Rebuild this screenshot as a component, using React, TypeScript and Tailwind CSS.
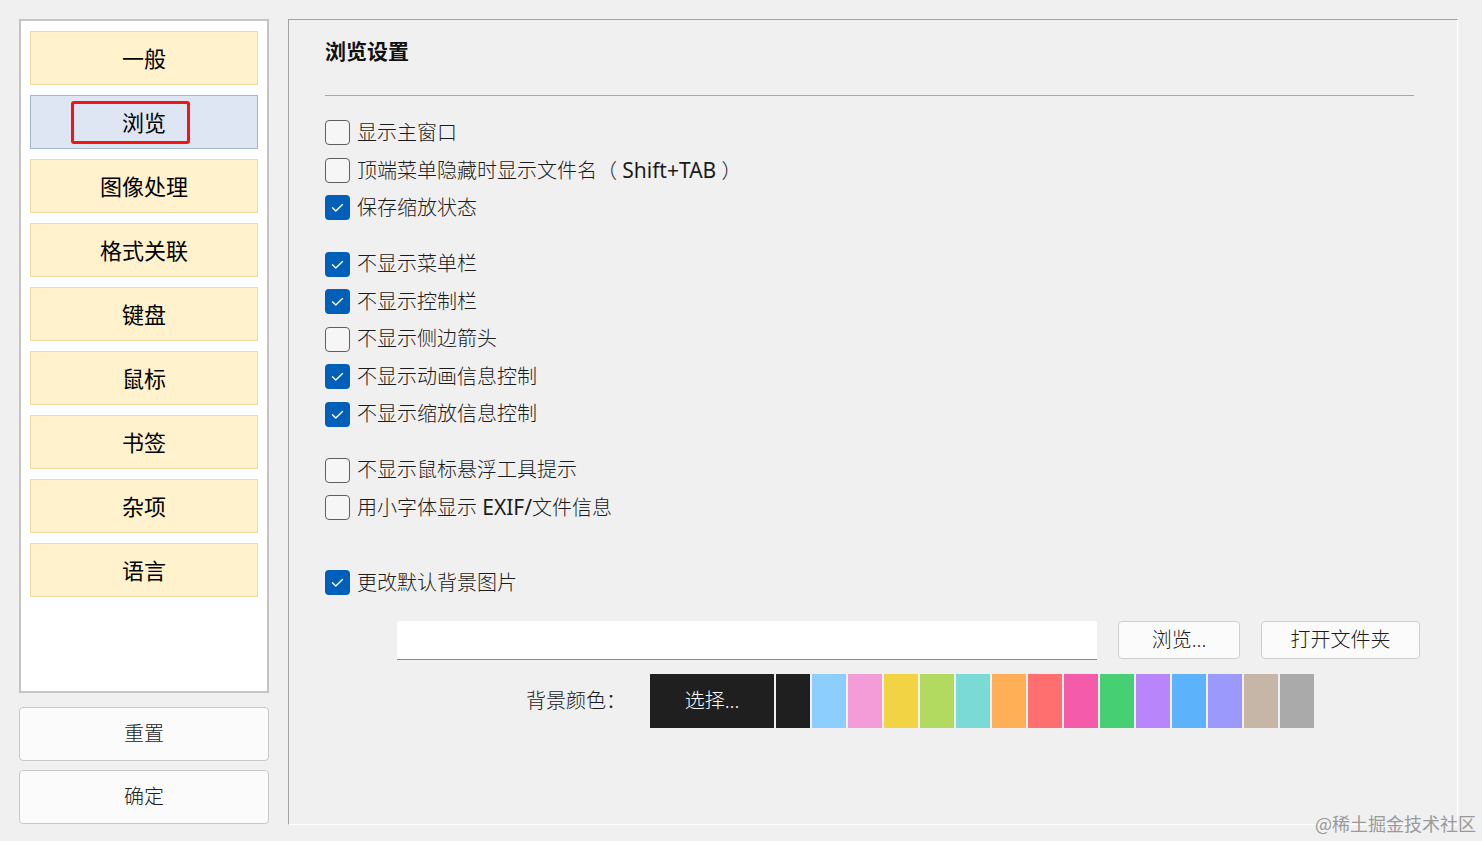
import React from 'react'

const navItems = ['一般', '浏览', '图像处理', '格式关联', '键盘', '鼠标', '书签', '杂项', '语言']

const swatches = [
  '#1f1f1f', '#8ccfff', '#f39cd8', '#f2d344', '#b2da60', '#7adbd6', '#ffb057', '#ff6f6f',
  '#f45ba9', '#46cf73', '#b885fa', '#5cb2fb', '#9b99fb', '#c6b6a8', '#aaaaaa',
]

const groups: { label: React.ReactNode; checked: boolean }[][] = [
  [
    { label: '显示主窗口', checked: false },
    {
      label: (
        <>
          顶端菜单隐藏时显示文件名（ <span className="text-[21px] font-normal">Shift+TAB</span> ）
        </>
      ),
      checked: false,
    },
    { label: '保存缩放状态', checked: true },
  ],
  [
    { label: '不显示菜单栏', checked: true },
    { label: '不显示控制栏', checked: true },
    { label: '不显示侧边箭头', checked: false },
    { label: '不显示动画信息控制', checked: true },
    { label: '不显示缩放信息控制', checked: true },
  ],
  [
    { label: '不显示鼠标悬浮工具提示', checked: false },
    {
      label: (
        <>
          用小字体显示 <span className="text-[21px] font-normal">EXIF/</span>文件信息
        </>
      ),
      checked: false,
    },
  ],
  [{ label: '更改默认背景图片', checked: true }],
]

function CheckRow({ label, checked }: { label: React.ReactNode; checked: boolean }) {
  return (
    <div className="flex h-[37.5px] items-center">
      {checked ? (
        <div className="flex h-[25px] w-[25px] items-center justify-center rounded-[4px] bg-[#005fb8]">
          <svg width="25" height="25" viewBox="0 0 25 25" fill="none">
            <path d="M7.5 12.8l3.3 3.3 6.7-6.7" stroke="#fff" strokeWidth="1.4" strokeLinecap="round" strokeLinejoin="round" />
          </svg>
        </div>
      ) : (
        <div className="h-[25px] w-[25px] rounded-[4px] border-[1.5px] border-[#5f5f5f] bg-[#f6f6f6]" />
      )}
      <span className="ml-[7px] text-[20px] font-light leading-none text-[#1b1b1b]">{label}</span>
    </div>
  )
}

export default function App() {
  return (
    <div
      className="relative flex h-[841px] w-[1482px] gap-[19px] overflow-hidden bg-[#f0f0f0] pl-[19px] pt-[19px]"
      style={{ fontFamily: '"Noto Sans", "Noto Sans CJK SC", sans-serif' }}
    >
      {/* Left column */}
      <div className="flex w-[250px] flex-col">
        <div className="flex h-[674px] flex-col gap-[10px] border-2 border-[#c4c4c4] bg-white px-[9px] pt-[10px]">
          {navItems.map((item) => {
            const active = item === '浏览'
            return (
              <div
                key={item}
                className={`relative flex h-[54px] items-center justify-center border text-[22px] text-black ${
                  active ? 'border-[#a3b6d6] bg-[#dee6f4]' : 'border-[#f3d9a3] bg-[#fff2cc]'
                }`}
              >
                {item}
                {active && (
                  <div className="absolute left-[40px] top-[5px] h-[43px] w-[119px] rounded-[3px] border-[3px] border-[#f41414]" />
                )}
              </div>
            )
          })}
        </div>
        <button className="mt-[14px] h-[54px] rounded-[4px] border border-[#c8c8c8] bg-[#fbfbfb] text-[20px] font-light text-[#222]">
          重置
        </button>
        <button className="mt-[9px] h-[54px] rounded-[4px] border border-[#c8c8c8] bg-[#fbfbfb] text-[20px] font-light text-[#222]">
          确定
        </button>
      </div>

      {/* Right panel */}
      <div className="flex h-[806px] w-[1170px] flex-col border-b border-l border-r border-t border-b-white border-l-[#a3a3a3] border-r-white border-t-[#a3a3a3] pl-[36px] pr-[43px]">
        <div className="flex h-[64px] items-center text-[21px] font-bold text-[#111]">浏览设置</div>
        <div className="mt-[11px] h-px bg-[#a8a8a8]" />
        <div className="mt-[18px] flex flex-col">
          {groups.map((g, i) => (
            <div key={i} className={i === 0 ? '' : i === 3 ? 'mt-[37.5px]' : 'mt-[18.75px]'}>
              {g.map((r, j) => (
                <CheckRow key={j} label={r.label} checked={r.checked} />
              ))}
            </div>
          ))}
        </div>

        <div className="ml-[72px] mt-[19px] flex items-center">
          <div className="h-[39px] w-[700px] shrink-0 rounded-t-[3px] border-b border-[#8a8a8a] bg-white" />
          <button className="ml-[21px] h-[38px] w-[122px] shrink-0 rounded-[4px] border border-[#cfcfcf] bg-[#fbfbfb] text-[20px] font-light text-[#1b1b1b]">
            浏览...
          </button>
          <button className="ml-[21px] h-[38px] w-[159px] shrink-0 rounded-[4px] border border-[#cfcfcf] bg-[#fbfbfb] text-[20px] font-light text-[#1b1b1b]">
            打开文件夹
          </button>
        </div>

        <div className="mt-[14px] flex h-[54px] items-center pl-[201px]">
          <span className="w-[124px] text-[20px] font-light text-[#1b1b1b]">背景颜色：</span>
          <div className="flex h-[54px] w-[124px] items-center justify-center bg-[#1f1f1f] text-[20px] font-light text-white">选择...</div>
          <div className="ml-[2px] flex h-[54px] gap-[2px]">
            {swatches.map((c) => (
              <div key={c} className="h-[54px] w-[34px]" style={{ backgroundColor: c }} />
            ))}
          </div>
        </div>
      </div>

      <div
        className="absolute bottom-[4px] right-[6px] text-[18px] text-[#9a9a9a]"
        style={{ fontFamily: '"Noto Sans CJK SC", serif' }}
      >
        @稀土掘金技术社区
      </div>
    </div>
  )
}
